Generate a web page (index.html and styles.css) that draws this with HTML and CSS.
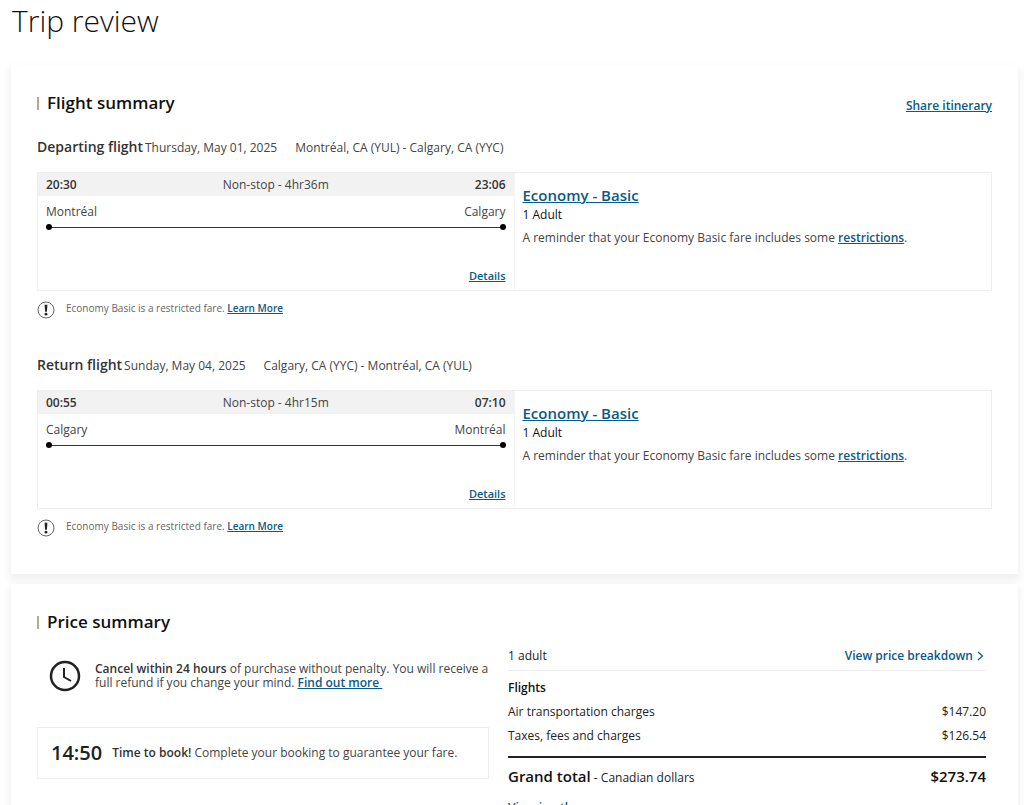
FILE: index.html
```html
<!DOCTYPE html>
<html lang="en">
<head>
    <meta charset="UTF-8">
    <meta name="viewport" content="width=device-width, initial-scale=1.0">
    <title>Trip review</title>
    <link rel="stylesheet" href="styles.css">
</head>
<body>

    <h1>Trip review</h1>

    <main>
        <section class="panel flights">
            <div class="panel-head">
                <h2>Flight summary</h2>
                <a href="#">Share itinerary</a>
            </div>

            <article class="flight">
                <div class="flight-title">
                    <h3>Departing flight</h3>
                    <span class="date">Thursday, May 01, 2025</span>
                    <span>Montréal, CA (YUL) - Calgary, CA (YYC)</span>
                </div>
                <div class="flight-box">
                    <div class="leg">
                        <div class="times">
                            <b>20:30</b>
                            <span>Non-stop - 4hr36m</span>
                            <b>23:06</b>
                        </div>
                        <div class="cities">
                            <span>Montréal</span>
                            <span>Calgary</span>
                        </div>
                        <div class="route"></div>
                        <a class="details" href="#">Details</a>
                    </div>
                    <div class="fare">
                        <a class="fare-name" href="#">Economy - Basic</a>
                        <p class="pax">1 Adult</p>
                        <p>A reminder that your Economy Basic fare includes some <a href="#">restrictions</a>.</p>
                    </div>
                </div>
                <div class="notice">
                    <svg width="18" height="18" viewBox="0 0 18 18">
                        <circle cx="9" cy="9" r="8" fill="none" stroke="#666" stroke-width="1"/>
                        <path d="M7.600 3.800h2.800l-.5 7H8.100z" fill="#222"/>
                        <circle cx="9" cy="13.200" r="1.400" fill="#222"/>
                    </svg>
                    <p>Economy Basic is a restricted fare. <a href="#">Learn More</a></p>
                </div>
            </article>

            <article class="flight">
                <div class="flight-title">
                    <h3>Return flight</h3>
                    <span class="date">Sunday, May 04, 2025</span>
                    <span>Calgary, CA (YYC) - Montréal, CA (YUL)</span>
                </div>
                <div class="flight-box">
                    <div class="leg">
                        <div class="times">
                            <b>00:55</b>
                            <span>Non-stop - 4hr15m</span>
                            <b>07:10</b>
                        </div>
                        <div class="cities">
                            <span>Calgary</span>
                            <span>Montréal</span>
                        </div>
                        <div class="route"></div>
                        <a class="details" href="#">Details</a>
                    </div>
                    <div class="fare">
                        <a class="fare-name" href="#">Economy - Basic</a>
                        <p class="pax">1 Adult</p>
                        <p>A reminder that your Economy Basic fare includes some <a href="#">restrictions</a>.</p>
                    </div>
                </div>
                <div class="notice">
                    <svg width="18" height="18" viewBox="0 0 18 18">
                        <circle cx="9" cy="9" r="8" fill="none" stroke="#666" stroke-width="1"/>
                        <path d="M7.600 3.800h2.800l-.5 7H8.100z" fill="#222"/>
                        <circle cx="9" cy="13.200" r="1.400" fill="#222"/>
                    </svg>
                    <p>Economy Basic is a restricted fare. <a href="#">Learn More</a></p>
                </div>
            </article>
        </section>

        <section class="panel price">
            <div class="price-info">
                <h2>Price summary</h2>
                <div class="cancel">
                    <svg width="32" height="32" viewBox="0 0 32 32" fill="none" stroke="#222">
                        <circle cx="16" cy="16" r="14" stroke-width="2.500"/>
                        <path d="M15 8v9l7 4" stroke-width="2"/>
                    </svg>
                    <p><b>Cancel within 24 hours</b> of purchase without penalty. You will receive a full refund if you change your mind. <a href="#">Find out more&nbsp;</a></p>
                </div>
                <div class="timer">
                    <span class="clock">14:50</span>
                    <p><b>Time to book!</b> Complete your booking to guarantee your fare.</p>
                </div>
            </div>

            <div class="price-table">
                <div class="price-head">
                    <span>1 adult</span>
                    <a href="#">View price breakdown
                        <svg width="7" height="10" viewBox="0 0 7 10"><path d="M1 1l4.500 4L1 9" fill="none" stroke="#0a5a87" stroke-width="1.200"/></svg>
                    </a>
                </div>
                <table>
                    <thead>
                        <tr><th colspan="2">Flights</th></tr>
                    </thead>
                    <tbody>
                        <tr><td>Air transportation charges</td><td>$147.20</td></tr>
                        <tr><td>Taxes, fees and charges</td><td>$126.54</td></tr>
                    </tbody>
                </table>
                <div class="total">
                    <p><strong>Grand total</strong> - Canadian dollars</p>
                    <strong>$273.74</strong>
                </div>
                <a class="other" href="#">View in other currency</a>
            </div>
        </section>
    </main>

</body>
</html>
```

FILE: styles.css
```css
* {
    box-sizing: border-box;
}

body {
    margin: 0;
    font-family: "Open Sans", Arial, sans-serif;
    font-size: 12px;
    line-height: 16px;
    color: #444;
    background: white;
}

h1, h2, h3, p {
    margin: 0;
}

a {
    color: #0a5a87;
    font-weight: 600;
}

b {
    font-weight: 600;
    color: #333;
}

h1 {
    padding: 0 12px;
    font-size: 30px;
    font-weight: 300;
    line-height: 42px;
    color: #111;
}

main {
    display: grid;
    gap: 10px;
    margin: 23px 6px 0 11px;
}

.panel {
    padding: 26px 26px 37px;
    background: white;
    box-shadow: 0 5px 8px 2px rgba(0, 0, 0, 0.06);
}

.panel-head {
    display: flex;
    justify-content: space-between;
    align-items: baseline;
}

h2 {
    display: flex;
    align-items: center;
    gap: 8px;
    font-size: 17px;
    font-weight: 600;
    line-height: 24px;
    color: #111;
}

h2::before {
    content: "";
    width: 2px;
    height: 13px;
    background: #b9a78f;
}

.flight {
    margin-top: 22px;
}

.flight + .flight {
    margin-top: 36px;
}

.flight-title {
    display: flex;
    align-items: baseline;
    line-height: 20px;
}

.flight-title h3 {
    margin-right: 2px;
    font-size: 14px;
    font-weight: 600;
    color: #333;
}

.date {
    margin-right: 18px;
}

.flight-box {
    display: grid;
    grid-template-columns: 1fr 1fr;
    min-height: 119px;
    margin-top: 14px;
    border: 1px solid #eee;
}

.leg {
    display: flex;
    flex-direction: column;
    border-right: 1px solid #f5f5f5;
}

.times {
    display: flex;
    justify-content: space-between;
    padding: 4px 8px 3px;
    background: #f2f2f2;
}

.cities {
    display: flex;
    justify-content: space-between;
    padding: 8px 8px 0;
}

.route {
    display: flex;
    align-items: center;
    justify-content: space-between;
    margin: 4px 8px 0;
    height: 6px;
    background: linear-gradient(#333, #333) center / 100% 1px no-repeat;
}

.route::before,
.route::after {
    content: "";
    width: 6px;
    height: 6px;
    border-radius: 50%;
    background: black;
}

.details {
    align-self: flex-end;
    margin: auto 8px 6px;
    font-size: 11px;
}

.fare {
    padding: 12px 8px;
}

.fare-name {
    display: block;
    font-size: 15px;
    line-height: 20px;
}

.fare .pax {
    margin: 2px 0 7px;
    color: #111;
}

.notice {
    display: flex;
    gap: 11px;
    margin-top: 9px;
    font-size: 10px;
    color: #666;
}

.notice svg {
    margin-top: 1px;
}

.price {
    display: grid;
    grid-template-columns: 452px 1fr;
    gap: 19px;
    padding-right: 32px;
}

.cancel {
    display: flex;
    align-items: center;
    gap: 14px;
    margin-top: 26px;
    padding-left: 12px;
    line-height: 14px;
}

.cancel svg {
    flex: none;
}

.timer {
    display: flex;
    align-items: center;
    gap: 10px;
    min-height: 52px;
    margin-top: 35px;
    padding: 0 13px;
    border: 1px solid #eee;
}

.clock {
    font-size: 20px;
    font-weight: 600;
    color: #222;
}

.price-table {
    padding-top: 38px;
    color: #222;
}

.price-head {
    display: flex;
    justify-content: space-between;
    padding-bottom: 6px;
    border-bottom: 1px solid #eee;
}

.price-head a {
    text-decoration: none;
}

.price-head svg {
    margin: 0 2px 0 1px;
    vertical-align: -1px;
}

table {
    width: 100%;
    margin-top: 5px;
    border-collapse: collapse;
}

th, td {
    height: 24px;
    padding: 0;
    text-align: left;
}

th {
    font-weight: 600;
    color: #111;
}

td + td {
    text-align: right;
}

.total {
    display: flex;
    justify-content: space-between;
    margin-top: 8px;
    padding-top: 8px;
    border-top: 2px solid #222;
    line-height: 20px;
}

.total strong {
    font-size: 15px;
    font-weight: 600;
    color: #111;
}

.other {
    display: inline-block;
    margin-top: 12px;
    text-decoration: none;
}
```
